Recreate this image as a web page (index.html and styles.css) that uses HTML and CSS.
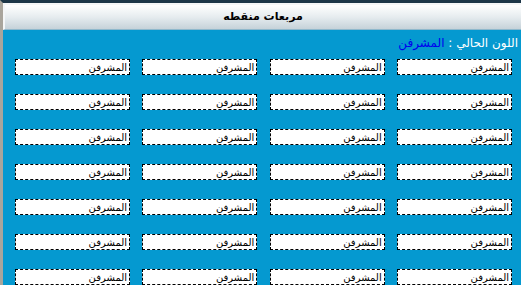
FILE: index.html
```html
<!DOCTYPE html>
<html lang="ar" dir="rtl">

<head>
    <meta charset="UTF-8">
    <title>مربعات منقطه</title>
    <link rel="stylesheet" href="styles.css">
</head>

<body>
    <div class="frame">
        <div class="title-bar">مربعات منقطه</div>
        <div class="panel">
            <p class="current">اللون الحالي : <span class="current-name">المشرفن</span></p>
            <div class="boxes">
                <input class="box" type="text" value="المشرفن">
                <input class="box" type="text" value="المشرفن">
                <input class="box" type="text" value="المشرفن">
                <input class="box" type="text" value="المشرفن">
                <input class="box" type="text" value="المشرفن">
                <input class="box" type="text" value="المشرفن">
                <input class="box" type="text" value="المشرفن">
                <input class="box" type="text" value="المشرفن">
                <input class="box" type="text" value="المشرفن">
                <input class="box" type="text" value="المشرفن">
                <input class="box" type="text" value="المشرفن">
                <input class="box" type="text" value="المشرفن">
                <input class="box" type="text" value="المشرفن">
                <input class="box" type="text" value="المشرفن">
                <input class="box" type="text" value="المشرفن">
                <input class="box" type="text" value="المشرفن">
                <input class="box" type="text" value="المشرفن">
                <input class="box" type="text" value="المشرفن">
                <input class="box" type="text" value="المشرفن">
                <input class="box" type="text" value="المشرفن">
                <input class="box" type="text" value="المشرفن">
                <input class="box" type="text" value="المشرفن">
                <input class="box" type="text" value="المشرفن">
                <input class="box" type="text" value="المشرفن">
                <input class="box" type="text" value="المشرفن">
                <input class="box" type="text" value="المشرفن">
                <input class="box" type="text" value="المشرفن">
                <input class="box" type="text" value="المشرفن">
            </div>
        </div>
    </div>
</body>

</html>
```

FILE: styles.css
```css
html,
body {
    margin: 0;
    padding: 0;
    overflow: hidden;
}

body {
    font-family: 'DejaVu Sans', sans-serif;
    font-size: 11px;
    background-color: #0599d0;
}

.frame {
    box-sizing: border-box;
    height: 285px;
    overflow: hidden;
    border-top: 3px solid #1d3647;
    border-left: 3px solid #a9a59c;
    background-color: #0599d0;
}

.title-bar {
    height: 24px;
    line-height: 24px;
    border-top: 2px solid #f4f6f7;
    border-left: 2px solid #f4f6f7;
    border-bottom: 1px solid #8fb8cc;
    background: linear-gradient(#ffffff, #e6ecef 50%, #c6d2d9);
    text-align: center;
    font-weight: bold;
    font-size: 11px;
    color: #000;
}

.panel {
    padding: 0 3px 0 12px;
}

.current {
    margin: 0;
    padding-top: 5px;
    height: 24px;
    line-height: 16px;
    font-size: 12px;
    color: #fff;
}

.current-name {
    color: #0000ee;
}

.boxes {
    display: grid;
    grid-template-columns: repeat(4, 115px);
    justify-content: space-between;
    row-gap: 19px;
    padding-right: 6px;
}

.box {
    box-sizing: border-box;
    width: 115px;
    height: 16px;
    margin: 0;
    padding: 0 2px;
    border: 1px dashed #000;
    background-color: #fff;
    font-family: 'DejaVu Sans', sans-serif;
    font-size: 10px;
    color: #000;
    text-align: right;
}
```
